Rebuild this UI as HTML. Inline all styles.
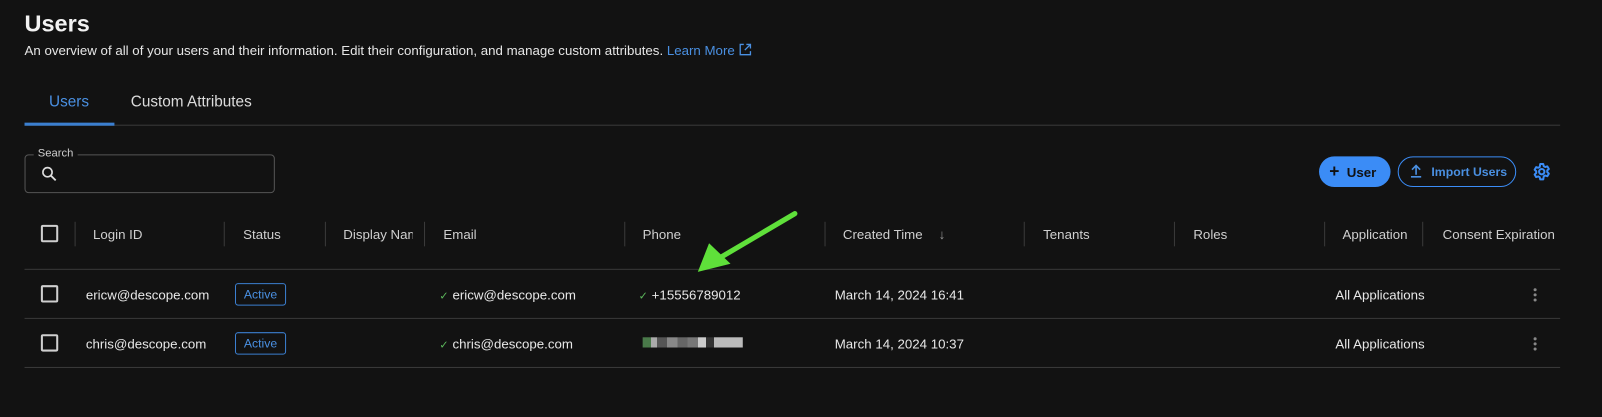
<!DOCTYPE html>
<html><head><meta charset="utf-8"><style>
*{margin:0;padding:0;box-sizing:border-box}
html,body{width:1602px;height:417px;overflow:hidden;background:#121212}
#w{position:absolute;left:0;top:0;width:1568px;height:408px;transform:scale(1.0217,1.0221);transform-origin:0 0;font-family:"Liberation Sans",sans-serif;color:#e4e4e4}
.a{position:absolute;white-space:nowrap}
.hd{font-size:13px;color:#cfcfcf;top:222px}
.sep{position:absolute;top:217px;width:1px;height:24px;background:#3a3a3a}
.line{position:absolute;left:24px;width:1503px;height:1px;background:#3a3a3a}
.cb{position:absolute;left:40px;width:17px;height:17px;border:2px solid #cfcfcf;border-radius:2px}
.badge{position:absolute;left:230px;width:50px;height:22px;border:1px solid #3b7fd0;border-radius:3px;color:#4a90e2;font-size:12px;text-align:center;line-height:20px}
.cell{font-size:13px;color:#e8e8e8}
.ck{color:#5cb85c;font-size:11px}
.kb{position:absolute;width:3px;height:3px;border-radius:50%;background:#888}
</style></head><body><div id="w">
<div class="a" style="left:24px;top:10px;font-size:23px;font-weight:bold;color:#f2f2f2">Users</div>
<div class="a" style="left:24px;top:42px;font-size:13px;color:#e6e6e6">An overview of all of your users and their information. Edit their configuration, and manage custom attributes. <span style="color:#4a90e2">Learn More</span> <svg style="vertical-align:-1px" width="13" height="13" viewBox="0 0 13 13"><path d="M5 1.5H1.5v10h10V8M7.5 1.5h4v4M11.5 1.5 6 7" stroke="#4a90e2" stroke-width="1.3" fill="none"/></svg></div>
<div class="a" style="left:48px;top:91px;font-size:15px;color:#4a90e2">Users</div>
<div class="a" style="left:128px;top:91px;font-size:15px;color:#dcdcdc">Custom Attributes</div>
<div class="a" style="left:24px;top:122px;width:1503px;height:1px;background:#3a3a3a"></div>
<div class="a" style="left:24px;top:120px;width:88px;height:3px;background:#3b7fd0"></div>
<div class="a" style="left:24px;top:151px;width:245px;height:38px;border:1px solid #555;border-radius:4px"></div>
<div class="a" style="left:33px;top:144px;padding:0 4px;background:#121212;font-size:11px;color:#cfcfcf">Search</div>
<svg class="a" style="left:40px;top:162px" width="16" height="16" viewBox="0 0 16 16"><circle cx="6.5" cy="6.5" r="4.5" stroke="#ddd" stroke-width="1.6" fill="none"/><path d="M10 10l4.5 4.5" stroke="#ddd" stroke-width="1.8"/></svg>
<div class="a" style="left:1291px;top:153px;width:70px;height:30px;border-radius:15px;background:#3b8cf6;color:#111;font-size:13px;font-weight:bold;line-height:30px;padding-left:10px"><span style="font-size:17px">+</span>&nbsp;&nbsp;User</div>
<div class="a" style="left:1368px;top:153px;width:116px;height:30px;border-radius:15px;border:1px solid #3b8cf6;color:#4a90e2;font-size:12px;font-weight:bold;line-height:28px;padding-left:32px">Import Users</div>
<svg class="a" style="left:1379px;top:159px" width="14" height="16" viewBox="0 0 14 16"><path d="M7 12V3M3 7l4-4 4 4M2 14h10" stroke="#4a90e2" stroke-width="1.6" fill="none"/></svg>
<svg class="a" style="left:1500px;top:159px" width="18" height="18" viewBox="0 0 24 24"><path d="M12 8.5a3.5 3.5 0 1 0 0 7 3.5 3.5 0 0 0 0-7zM10 2h4l.6 2.8 2 1.1 2.7-.9 2 3.4-2.1 1.9v2.3l2.1 1.9-2 3.4-2.7-.9-2 1.1L14 22h-4l-.6-2.8-2-1.1-2.7.9-2-3.4 2.1-1.9v-2.3L2.7 9.4l2-3.4 2.7.9 2-1.1z" stroke="#3b8cf6" stroke-width="2.6" fill="none" stroke-linejoin="round"/></svg>
<div class="cb" style="top:220px"></div>
<div class="sep" style="left:73px"></div><div class="sep" style="left:219px"></div><div class="sep" style="left:318px"></div><div class="sep" style="left:415px"></div><div class="sep" style="left:611px"></div><div class="sep" style="left:807px"></div><div class="sep" style="left:1002px"></div><div class="sep" style="left:1149px"></div><div class="sep" style="left:1296px"></div><div class="sep" style="left:1392px"></div>
<div class="a hd" style="left:91px">Login ID</div>
<div class="a hd" style="left:238px">Status</div>
<div class="a hd" style="left:336px;width:68px;overflow:hidden">Display Name</div>
<div class="a hd" style="left:434px">Email</div>
<div class="a hd" style="left:629px">Phone</div>
<div class="a hd" style="left:825px">Created Time <span style="margin-left:12px;color:#999">↓</span></div>
<div class="a hd" style="left:1021px">Tenants</div>
<div class="a hd" style="left:1168px">Roles</div>
<div class="a hd" style="left:1314px;width:71px;overflow:hidden">Application</div>
<div class="a hd" style="left:1412px;width:115px;overflow:hidden">Consent Expiration</div>
<div class="line" style="top:263px"></div><div class="line" style="top:311px"></div><div class="line" style="top:359px"></div>
<div class="cb" style="top:279px"></div>
<div class="a cell" style="left:84px;top:281px">ericw@descope.com</div>
<div class="badge" style="top:277px">Active</div>
<div class="a cell" style="left:430px;top:281px"><span class="ck">✓</span> ericw@descope.com</div>
<div class="a cell" style="left:625px;top:281px"><span class="ck">✓</span> +15556789012</div>
<div class="a cell" style="left:817px;top:281px">March 14, 2024 16:41</div>
<div class="a cell" style="left:1307px;top:281px;width:90px;overflow:hidden">All Applications</div>
<div class="kb" style="left:1501px;top:282px"></div><div class="kb" style="left:1501px;top:287px"></div><div class="kb" style="left:1501px;top:292px"></div>
<div class="cb" style="top:327px"></div>
<div class="a cell" style="left:84px;top:329px">chris@descope.com</div>
<div class="badge" style="top:325px">Active</div>
<div class="a cell" style="left:430px;top:329px"><span class="ck">✓</span> chris@descope.com</div>
<div class="a" style="left:629px;top:330px;width:98px;height:10px;background:linear-gradient(90deg,#4a7a4a 0 8px,#aaa 8px 14px,#555 14px 24px,#888 24px 34px,#666 34px 44px,#777 44px 54px,#ccc 54px 62px,#333 62px 70px,#bbb 70px 98px)"></div>
<div class="a cell" style="left:817px;top:329px">March 14, 2024 10:37</div>
<div class="a cell" style="left:1307px;top:329px;width:90px;overflow:hidden">All Applications</div>
<div class="kb" style="left:1501px;top:330px"></div><div class="kb" style="left:1501px;top:335px"></div><div class="kb" style="left:1501px;top:340px"></div>
<svg class="a" style="left:670px;top:200px" width="120" height="75" viewBox="0 0 120 75"><path d="M108 9 L35 52" stroke="#5fe03a" stroke-width="5" stroke-linecap="round"/><path d="M13 66 L24 38 L45 58 Z" fill="#5fe03a"/></svg>
</div></body></html>
